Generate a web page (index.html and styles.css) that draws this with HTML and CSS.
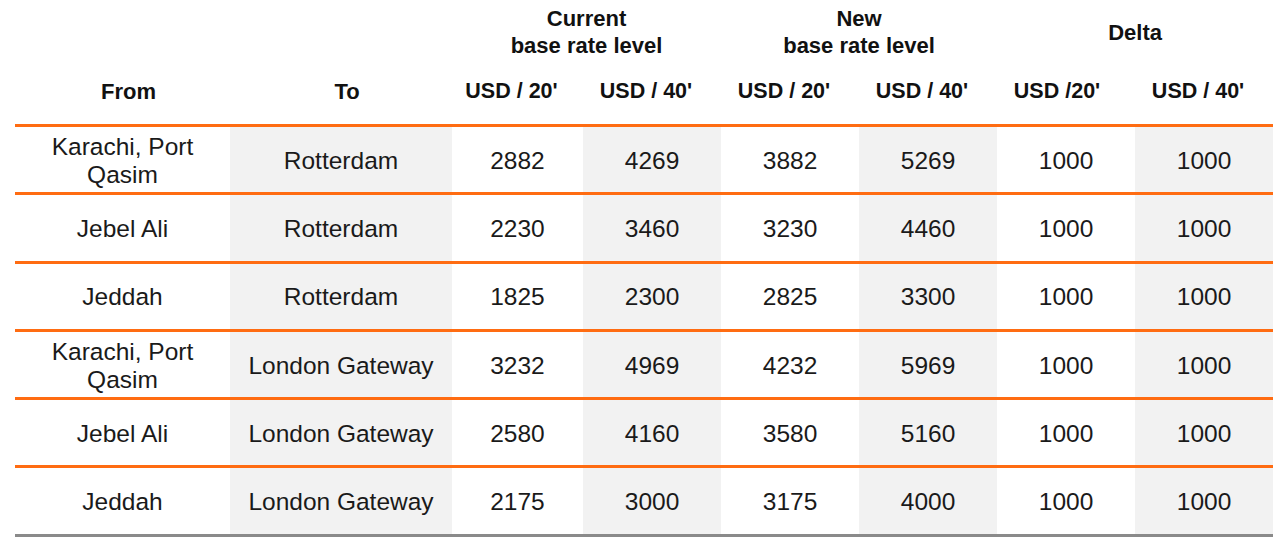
FILE: index.html
```html
<!DOCTYPE html>
<html>
<head>
<meta charset="utf-8">
<link rel="stylesheet" href="styles.css">
</head>
<body>
<table class="rates">
  <colgroup>
    <col class="c-from"><col class="c-to"><col class="c-n1"><col class="c-n"><col class="c-n"><col class="c-n"><col class="c-n"><col class="c-n">
  </colgroup>
  <thead>
    <tr class="group-row">
      <th></th>
      <th></th>
      <th colspan="2">Current<br>base rate level</th>
      <th colspan="2">New<br>base rate level</th>
      <th colspan="2">Delta</th>
    </tr>
    <tr class="unit-row">
      <th class="route">From</th>
      <th class="route">To</th>
      <th>USD / 20'</th>
      <th>USD / 40'</th>
      <th>USD / 20'</th>
      <th>USD / 40'</th>
      <th class="wide">USD /20'</th>
      <th>USD / 40'</th>
    </tr>
  </thead>
  <tbody>
    <tr><td>Karachi, Port<br>Qasim</td><td class="shade">Rotterdam</td><td>2882</td><td class="shade">4269</td><td>3882</td><td class="shade">5269</td><td>1000</td><td class="shade">1000</td></tr>
    <tr><td>Jebel Ali</td><td class="shade">Rotterdam</td><td>2230</td><td class="shade">3460</td><td>3230</td><td class="shade">4460</td><td>1000</td><td class="shade">1000</td></tr>
    <tr><td>Jeddah</td><td class="shade">Rotterdam</td><td>1825</td><td class="shade">2300</td><td>2825</td><td class="shade">3300</td><td>1000</td><td class="shade">1000</td></tr>
    <tr><td>Karachi, Port<br>Qasim</td><td class="shade">London Gateway</td><td>3232</td><td class="shade">4969</td><td>4232</td><td class="shade">5969</td><td>1000</td><td class="shade">1000</td></tr>
    <tr><td>Jebel Ali</td><td class="shade">London Gateway</td><td>2580</td><td class="shade">4160</td><td>3580</td><td class="shade">5160</td><td>1000</td><td class="shade">1000</td></tr>
    <tr class="last"><td>Jeddah</td><td class="shade">London Gateway</td><td>2175</td><td class="shade">3000</td><td>3175</td><td class="shade">4000</td><td>1000</td><td class="shade">1000</td></tr>
  </tbody>
</table>
</body>
</html>
```
FILE: styles.css
```css
html, body {
  margin: 0;
  padding: 0;
  background: #ffffff;
}

body {
  font-family: "Liberation Sans", Arial, sans-serif;
  color: #1a1a1a;
}

.rates {
  margin-left: 15px;
  width: 1256px;
  border-collapse: separate;
  border-spacing: 0;
  table-layout: fixed;
}

.c-from { width: 215px; }
.c-to { width: 222px; }
.c-n1 { width: 131px; }
.c-n { width: 138px; }

.rates th {
  font-weight: bold;
  font-size: 22px;
  color: #111111;
  text-align: center;
  vertical-align: middle;
  padding: 0;
  line-height: 27px;
}

.group-row th {
  height: 64px;
}

.unit-row th {
  height: 54px;
  padding-bottom: 6px;
  padding-right: 12px;
  font-size: 21.5px;
}

.unit-row th.wide {
  padding-right: 18px;
}

.unit-row th.route {
  padding-right: 0;
  padding-left: 12px;
  font-size: 22px;
}

.rates td {
  font-size: 24.5px;
  text-align: center;
  vertical-align: middle;
  padding: 2px 0 0 0;
  height: 63.3px;
  line-height: 28px;
  border-top: 3px solid #ff6c12;
}

.rates td.shade {
  background: #f2f2f2;
}

.rates tr.last td {
  border-bottom: 3px solid #8a8a8a;
}
```
